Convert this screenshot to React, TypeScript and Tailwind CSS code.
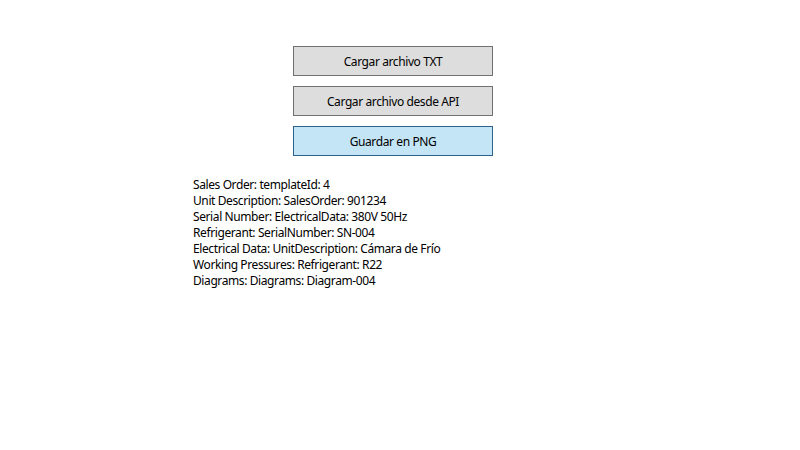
export default function App() {
  const lines = [
    "Sales Order: templateId: 4",
    "Unit Description: SalesOrder: 901234",
    "Serial Number: ElectricalData: 380V 50Hz",
    "Refrigerant: SerialNumber: SN-004",
    "Electrical Data: UnitDescription: Cámara de Frío",
    "Working Pressures: Refrigerant: R22",
    "Diagrams: Diagrams: Diagram-004",
  ];
  return (
    <div
      className="w-[800px] h-[450px] bg-white text-black pt-[46px] tracking-[-0.4px]"
      style={{ fontFamily: '"Noto Sans", sans-serif' }}
    >
      <div className="flex flex-col gap-[10px] pl-[293px]">
        <button className="w-[200px] h-[30px] border border-[#707070] bg-[#dddddd] text-[12px] leading-none pt-px">
          Cargar archivo TXT
        </button>
        <button className="w-[200px] h-[30px] border border-[#707070] bg-[#dddddd] text-[12px] leading-none pt-px">
          Cargar archivo desde API
        </button>
        <button className="w-[200px] h-[30px] border border-[#2c628b] bg-[#c4e5f6] text-[12px] leading-none pt-px">
          Guardar en PNG
        </button>
      </div>
      <div className="mt-[21px] pl-[193px] text-[12px] leading-[16px]">
        {lines.map((l) => (
          <div key={l}>{l}</div>
        ))}
      </div>
    </div>
  );
}
